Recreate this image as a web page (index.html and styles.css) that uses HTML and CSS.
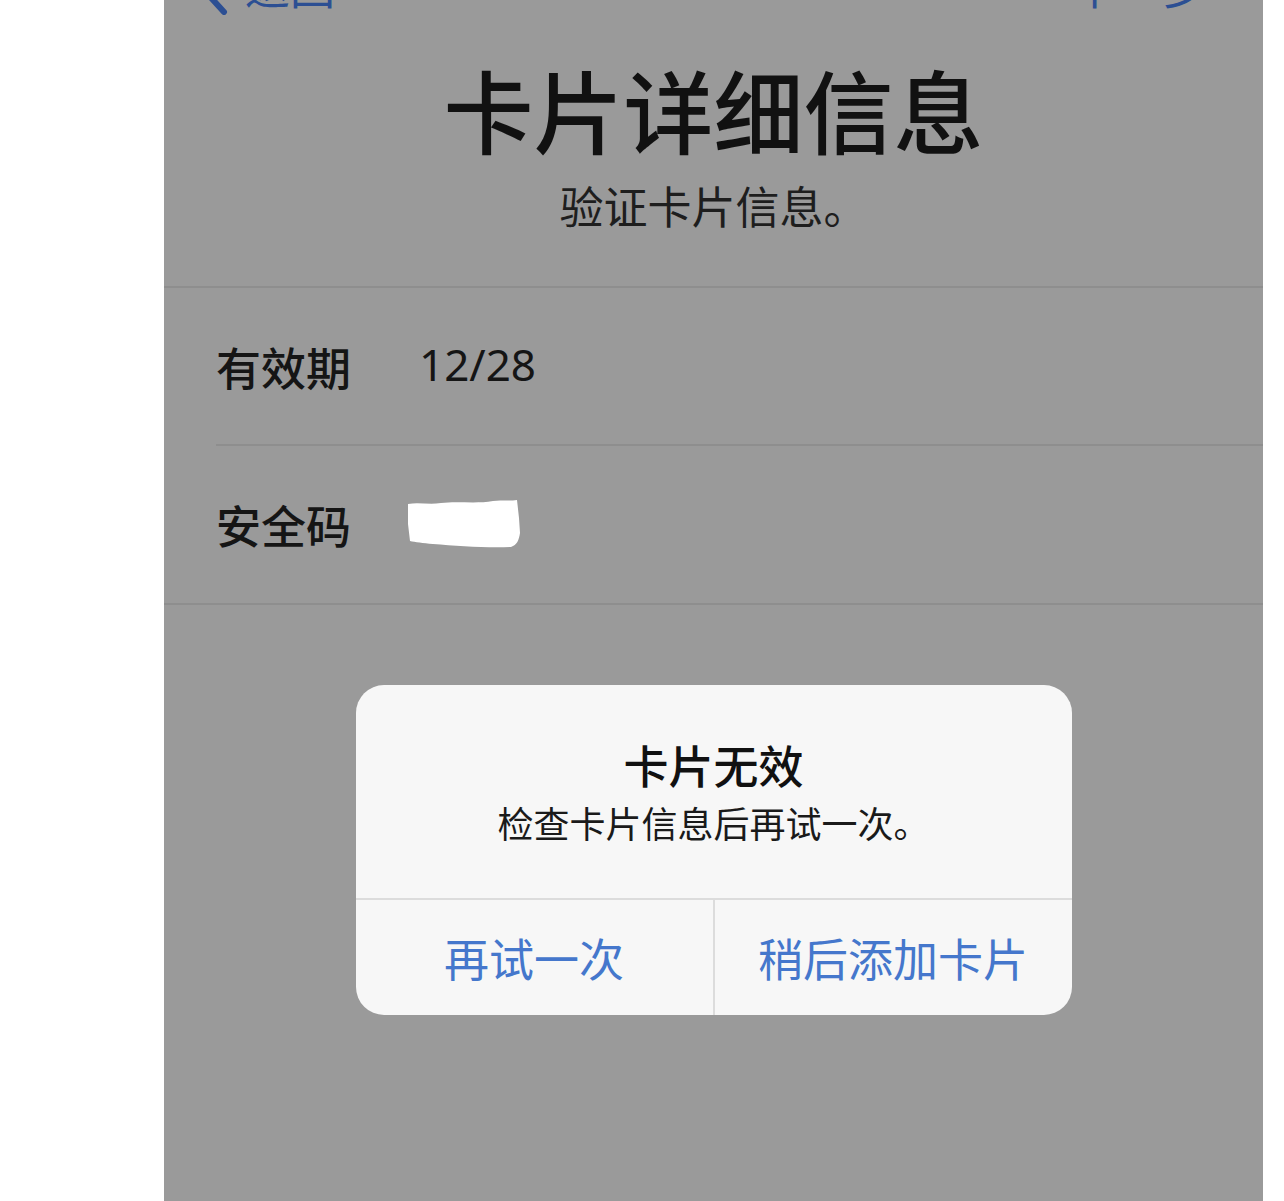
FILE: index.html
```html
<!DOCTYPE html>
<html>
<head>
	<meta charset="utf-8">
	<meta name="viewport" content="width=device-width, initial-scale=1">
	<title>卡片详细信息</title>
	<link rel="stylesheet" href="styles.css">
</head>
<body>

<div class="screen">

	<div class="navbar">
		<span class="nav-back">
			<svg class="chevron" width="28" height="50" viewBox="0 0 28 50">
				<polyline points="24,3 4,25 24,47" fill="none" stroke="#2c4f93" stroke-width="6" stroke-linecap="round" stroke-linejoin="round"/>
			</svg>
			返回
		</span>
		<span class="nav-next">下一步</span>
	</div>

	<div class="header">
		<h1 class="title">卡片详细信息</h1>
		<p class="subtitle">验证卡片信息。</p>
	</div>

	<div class="form">
		<div class="row">
			<span class="label">有效期</span>
			<span class="value value-date">12/28</span>
		</div>
		<div class="row">
			<span class="label">安全码</span>
			<span class="value">
				<!-- 手动涂白的安全码 -->
				<svg width="114" height="50" viewBox="0 0 114 50">
					<path d="M1,4 C12,2 22,5 34,3 C50,1 70,4 86,1 C96,0 104,1 110,0 L112,18 L113,33 C112,40 110,45 104,47 C80,48 50,46 26,44 C16,43 8,42 3,41 L1,24 Z" fill="#ffffff"/>
				</svg>
			</span>
		</div>
	</div>

	<div class="alert">
		<div class="alert-body">
			<div class="alert-title">卡片无效</div>
			<div class="alert-message">检查卡片信息后再试一次。</div>
		</div>
		<div class="alert-actions">
			<div class="alert-button">再试一次</div>
			<div class="alert-button">稍后添加卡片</div>
		</div>
	</div>

</div>

</body>
</html>
```

FILE: styles.css
```css
body {
	margin: 0;
	background-color: #ffffff;
	font-family: "Noto Sans CJK SC", "Noto Sans", sans-serif;
}

.screen {
	width: 1099px;
	height: 1201px;
	margin-left: 164px;
	background-color: #9a9a9a;
	overflow: hidden;
}

.navbar {
	display: flex;
	justify-content: space-between;
	align-items: center;
	height: 45px;
	margin-top: -37px;
	padding: 0 55px 0 36px;
	font-size: 45px;
	line-height: 45px;
	color: #2c4f93;
}

.nav-back {
	display: flex;
	align-items: center;
	gap: 17px;
}

.chevron {
	margin-top: 8px;
}

.header {
	text-align: center;
	padding-bottom: 59px;
}

.title {
	margin: 55px 0 0;
	font-size: 90px;
	line-height: 90px;
	font-weight: 500;
	color: #111111;
}

.subtitle {
	margin: 30px 0 0;
	font-size: 44px;
	line-height: 44px;
	color: #1e1e1e;
}

.form {
	border-top: 2px solid #8e8e8e;
	border-bottom: 2px solid #8e8e8e;
	padding-left: 52px;
}

.row {
	display: flex;
	align-items: center;
	height: 156px;
}

.row + .row {
	border-top: 2px solid #8e8e8e;
	height: 157px;
}

.label {
	width: 191px;
	font-size: 45px;
	line-height: 45px;
	font-weight: 500;
	color: #151515;
}

.value {
	display: flex;
	align-items: center;
}

.value-date {
	padding-left: 12px;
	margin-top: -4px;
	font-family: "Noto Sans", sans-serif;
	font-size: 44px;
	color: #151515;
}

.alert {
	width: 716px;
	margin: 80px auto 0;
	background-color: #f7f7f7;
	border-radius: 28px;
	overflow: hidden;
}

.alert-body {
	text-align: center;
	padding: 53px 20px 54px;
	border-bottom: 2px solid #dcdcdc;
}

.alert-title {
	font-size: 45px;
	line-height: 54px;
	font-weight: 500;
	color: #111111;
}

.alert-message {
	margin-top: 8px;
	font-size: 36px;
	line-height: 44px;
	color: #1a1a1a;
}

.alert-actions {
	display: flex;
	height: 115px;
}

.alert-button {
	flex: 1;
	display: flex;
	align-items: center;
	justify-content: center;
	font-size: 45px;
	color: #4577cc;
}

.alert-button + .alert-button {
	border-left: 2px solid #dcdcdc;
}
```
